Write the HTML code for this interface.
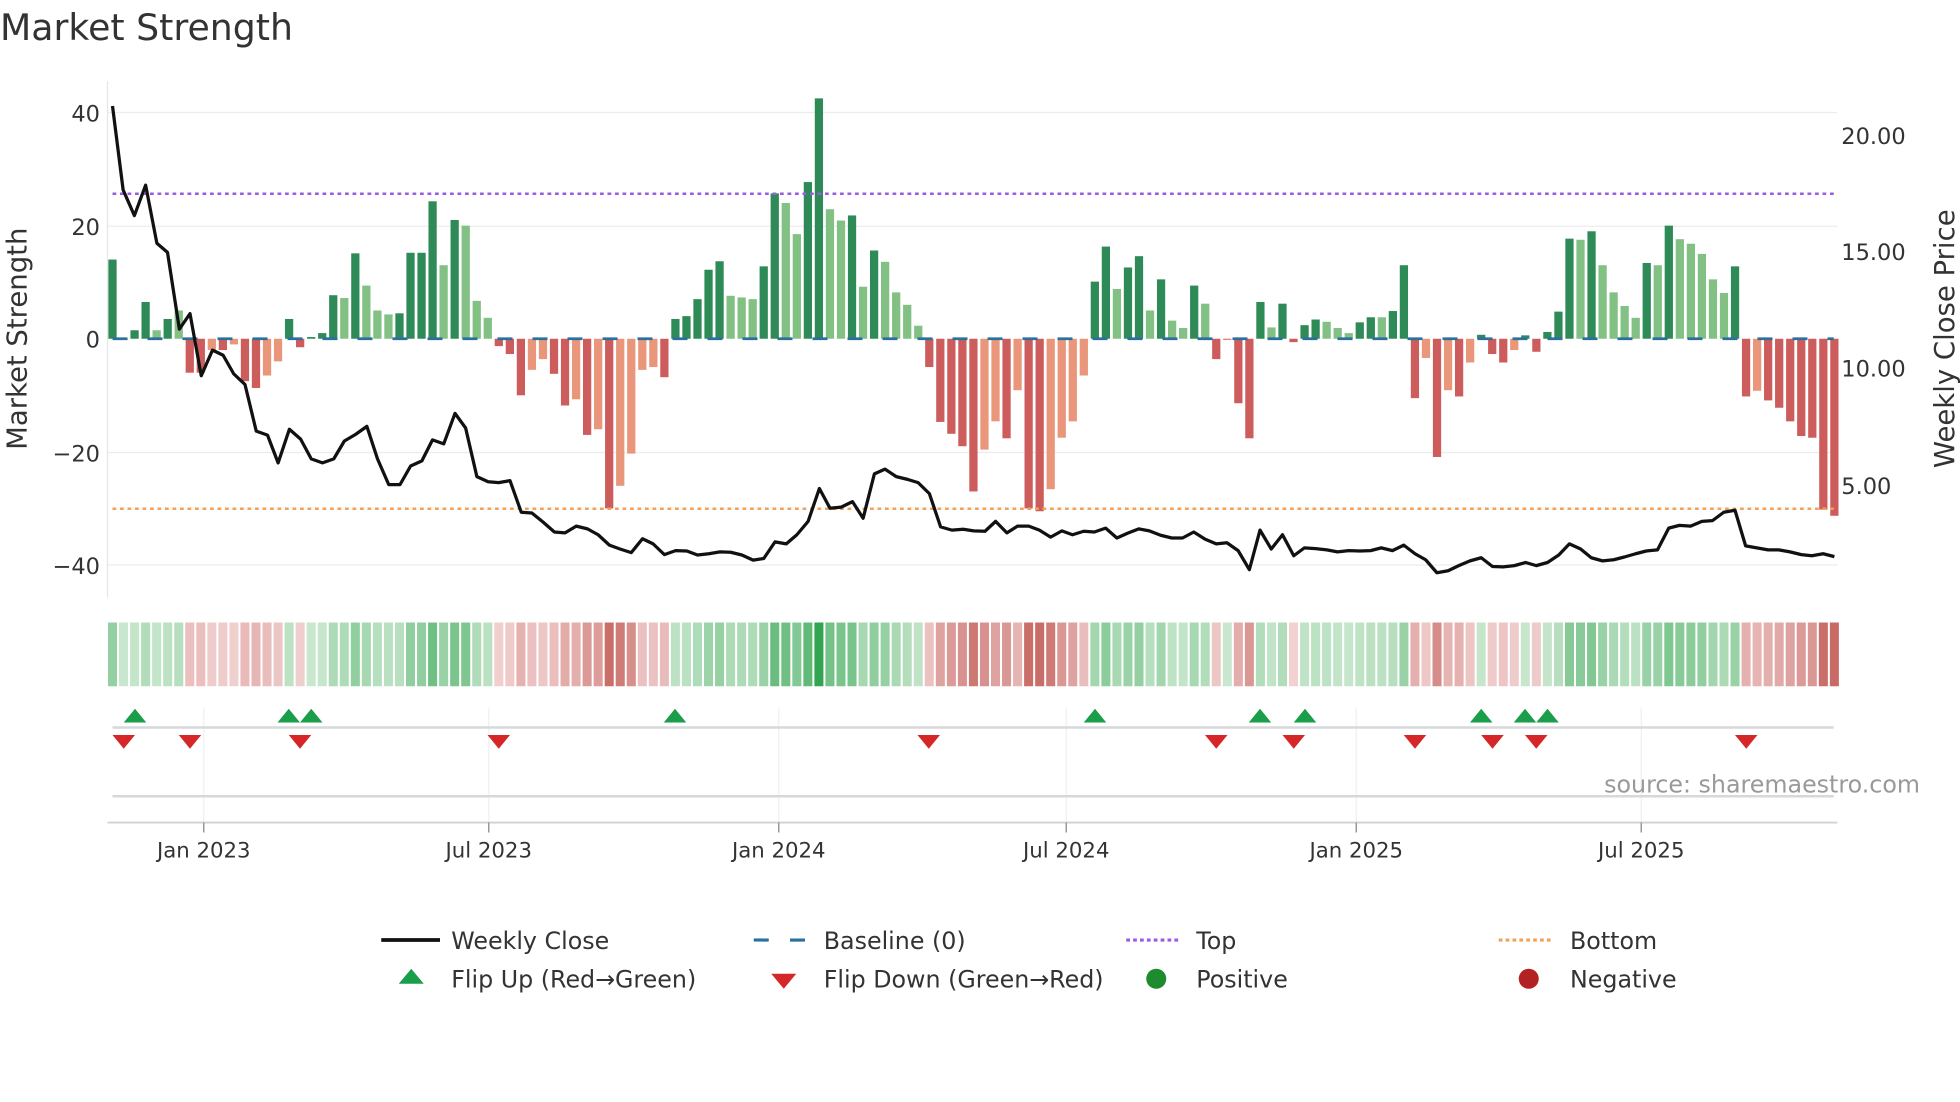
<!DOCTYPE html>
<html><head><meta charset="utf-8"><style>
html,body{margin:0;padding:0;background:#fff;}
svg{display:block;font-family:"DejaVu Sans","Liberation Sans",sans-serif;}
</style></head><body>
<svg id="s" width="1960" height="1102" viewBox="0 0 1568 881.6" xmlns="http://www.w3.org/2000/svg">
<rect width="1568" height="882" fill="#fff"/>
<text x="0" y="32" font-size="29" fill="#333">Market Strength</text>
<g stroke="#ececec" stroke-width="1">
<line x1="86" y1="90" x2="1470" y2="90"/><line x1="86" y1="181" x2="1470" y2="181"/>
<line x1="86" y1="362" x2="1470" y2="362"/><line x1="86" y1="452" x2="1470" y2="452"/>
</g>
<line x1="86" y1="65" x2="86" y2="478" stroke="#e6e6e6"/>
<g font-size="18" fill="#333" text-anchor="end">
<text x="80" y="97">40</text><text x="80" y="188">20</text><text x="80" y="278">0</text>
<text x="80" y="369">−20</text><text x="80" y="459">−40</text>
</g>
<g font-size="18" fill="#333">
<text x="1473" y="115">20.00</text><text x="1473" y="208">15.00</text>
<text x="1473" y="301">10.00</text><text x="1473" y="395">5.00</text>
</g>
<text transform="translate(21,271) rotate(-90)" font-size="22" fill="#333" text-anchor="middle">Market Strength</text>
<text transform="translate(1563,271) rotate(-90)" font-size="22" fill="#333" text-anchor="middle">Weekly Close Price</text>
<g id="bars"></g>
<line x1="90" y1="271" x2="1467" y2="271" stroke="#2a6f9e" stroke-width="2.2" stroke-dasharray="12 16" id="base"/>
<line x1="90" y1="155" x2="1467" y2="155" stroke="#9a5ce0" stroke-width="2" stroke-dasharray="3 3"/>
<line x1="90" y1="407" x2="1467" y2="407" stroke="#f0a25a" stroke-width="2" stroke-dasharray="3 3"/>
<polyline id="price" fill="none" stroke="#111" stroke-width="2.6" stroke-linejoin="round"/>
<g id="heat"></g>
<g stroke="#eef0f2"><line x1="163" y1="566" x2="163" y2="658"/><line x1="391" y1="566" x2="391" y2="658"/><line x1="623" y1="566" x2="623" y2="658"/><line x1="853" y1="566" x2="853" y2="658"/><line x1="1085" y1="566" x2="1085" y2="658"/><line x1="1313" y1="566" x2="1313" y2="658"/></g>
<line x1="90" y1="582" x2="1467" y2="582" stroke="#d6d8da" stroke-width="2"/>
<line x1="90" y1="637" x2="1467" y2="637" stroke="#d6d8da" stroke-width="2"/>
<line x1="86" y1="658" x2="1470" y2="658" stroke="#d0d2d4" stroke-width="1.5"/>
<g stroke="#999" stroke-width="1.2"><line x1="163" y1="658" x2="163" y2="666"/><line x1="391" y1="658" x2="391" y2="666"/><line x1="623" y1="658" x2="623" y2="666"/><line x1="853" y1="658" x2="853" y2="666"/><line x1="1085" y1="658" x2="1085" y2="666"/><line x1="1313" y1="658" x2="1313" y2="666"/></g>
<g id="flips"></g>
<g font-size="17" fill="#333" text-anchor="middle">
<text x="163" y="686">Jan 2023</text><text x="391" y="686">Jul 2023</text><text x="623" y="686">Jan 2024</text>
<text x="853" y="686">Jul 2024</text><text x="1085" y="686">Jan 2025</text><text x="1313" y="686">Jul 2025</text>
</g>
<text x="1536" y="634" font-size="19" fill="#999" text-anchor="end">source: sharemaestro.com</text>
<g font-size="19" fill="#333">
<line x1="305" y1="752" x2="352" y2="752" stroke="#111" stroke-width="3"/>
<text x="361" y="759">Weekly Close</text>
<line x1="603" y1="752" x2="647" y2="752" stroke="#2a6f9e" stroke-width="2.5" stroke-dasharray="12 17"/>
<text x="659" y="759">Baseline (0)</text>
<line x1="901" y1="752" x2="945" y2="752" stroke="#9a5ce0" stroke-width="2.5" stroke-dasharray="3 2.5"/>
<text x="957" y="759">Top</text>
<line x1="1199" y1="752" x2="1243" y2="752" stroke="#f0a25a" stroke-width="2.5" stroke-dasharray="3 2.5"/>
<text x="1256" y="759">Bottom</text>
<polygon points="319,787 339,787 329,775" fill="#1a9e4a"/>
<text x="361" y="790">Flip Up (Red→Green)</text>
<polygon points="617,779 637,779 627,791" fill="#d62728"/>
<text x="659" y="790">Flip Down (Green→Red)</text>
<circle cx="925" cy="783" r="8" fill="#1e8c2e"/>
<text x="957" y="790">Positive</text>
<circle cx="1223" cy="783" r="8" fill="#b22222"/>
<text x="1256" y="790">Negative</text>
</g>
</svg>
<script>
(function(){
var NS="http://www.w3.org/2000/svg";
function el(t,a,p){var e=document.createElementNS(NS,t);for(var k in a)e.setAttribute(k,a[k]);p.appendChild(e);return e;}
var d=[[14,'g'],[0,'g'],[1.5,'g'],[6.5,'g'],[1.5,'l'],[3.5,'g'],[5,'l'],[-6,'r'],[-6,'r'],[-2,'s'],[-2,'r'],[-1,'s'],[-7.5,'r'],[-8.7,'r'],[-6.5,'s'],[-4,'s'],[3.5,'g'],[-1.5,'r'],[0.3,'g'],[1,'g'],[7.7,'g'],[7.2,'l'],[15.1,'g'],[9.4,'l'],[5,'l'],[4.3,'l'],[4.5,'g'],[15.2,'g'],[15.2,'g'],[24.3,'g'],[13,'l'],[21,'g'],[20,'l'],[6.7,'l'],[3.7,'l'],[-1.3,'r'],[-2.7,'r'],[-10,'r'],[-5.5,'s'],[-3.6,'s'],[-6.2,'r'],[-11.8,'r'],[-10.7,'s'],[-17,'r'],[-16,'s'],[-30,'r'],[-26,'s'],[-20.3,'s'],[-5.5,'s'],[-5,'s'],[-6.8,'r'],[3.5,'g'],[4,'g'],[7,'g'],[12.2,'g'],[13.7,'g'],[7.6,'l'],[7.3,'l'],[7,'l'],[12.8,'g'],[25.7,'g'],[24,'l'],[18.5,'l'],[27.7,'g'],[42.5,'g'],[22.9,'l'],[20.9,'l'],[21.8,'g'],[9.2,'l'],[15.6,'g'],[13.6,'l'],[8.2,'l'],[6,'l'],[2.3,'l'],[-5,'r'],[-14.7,'r'],[-16.8,'r'],[-19,'r'],[-27,'r'],
[-19.6,'s'],[-14.6,'s'],[-17.6,'r'],[-9.1,'s'],[-30,'r'],[-30.5,'r'],[-26.6,'s'],[-17.5,'s'],[-14.6,'s'],[-6.5,'s'],[10.1,'g'],[16.3,'g'],[8.8,'l'],[12.6,'g'],[14.6,'g'],[5,'l'],[10.5,'g'],[3.2,'l'],[1.9,'l'],[9.4,'g'],[6.2,'l'],[-3.6,'r'],[0,'r'],[-11.4,'r'],[-17.6,'r'],[6.5,'g'],[2,'l'],[6.2,'g'],[-0.6,'r'],[2.4,'g'],[3.4,'g'],[3,'l'],[1.9,'l'],[1,'l'],[2.9,'g'],[3.8,'g'],[3.8,'l'],[4.9,'g'],[13,'g'],[-10.5,'r'],[-3.4,'s'],[-20.9,'r'],[-9.1,'s'],[-10.2,'r'],[-4.2,'s'],[0.7,'g'],[-2.7,'r'],[-4.2,'r'],[-2,'s'],[0.6,'g'],[-2.3,'r'],[1.2,'g'],[4.8,'g'],[17.7,'g'],[17.5,'l'],[19,'g'],[13,'l'],[8.2,'l'],[5.8,'l'],[3.7,'l'],[13.4,'g'],[13,'l'],[20,'g'],[17.6,'l'],[16.8,'l'],[15,'l'],[10.5,'l'],[8.1,'l'],[12.8,'g'],[-10.2,'r'],[-9.2,'s'],[-10.9,'r'],[-12.2,'r'],[-14.6,'r'],[-17.2,'r'],[-17.5,'r'],[-30.2,'r'],[-31.3,'r']];
var n=d.length, x0=90, x1=1467.5, st=(x1-x0)/(n-1), k=4.525;
var col={g:'#2e8b57',l:'#82c084',r:'#cd5c5c',s:'#e9967a'};
var bars=document.getElementById('bars'), heat=document.getElementById('heat');
function mix(a,b,t){return 'rgb('+[0,1,2].map(function(i){return Math.round(a[i]+(b[i]-a[i])*t);}).join(',')+')';}
d.forEach(function(v,i){
  var x=x0+i*st, h=v[0]*k, y=h>=0?271-h:271;
  el('rect',{x:x-3.3,y:y,width:6.6,height:Math.max(Math.abs(h),0.8),fill:col[v[1]]},bars);
  var a=Math.min(Math.abs(v[0])/42,1), c;
  if(v[0]>=0){c=mix([214,237,217],[50,165,80],Math.min(1,0.08+a*0.95));}
  else{c=mix([244,218,218],[200,105,100],Math.min(1,0.06+a*1.25));}
  el('rect',{x:x-st/2+0.8,y:498,width:st-1.6,height:51,fill:c},heat);
});
var p1=[[180,268],[197,480],[215,545],[233,468],[251,615],[268,638],[287,832],[304,793],[322,950],[340,885],[357,898],[374,945],[392,972],[410,1090],[428,1100],[445,1170],[463,1085],[481,1110],[498,1160],[516,1170],[534,1160],[551,1115],[569,1098],[587,1078],[604,1160],[622,1225],[640,1225],[657,1178],[675,1165],[692,1112],[710,1122],[728,1045],[745,1082],[763,1205],[781,1218],[798,1220],[816,1215],[834,1295],[851,1297],[869,1320],[887,1345],[904,1347],[922,1330],[940,1337],[957,1352],[975,1378],[992,1388],[1010,1397],[1028,1362],[1045,1375],[1063,1402],[1081,1392],[1099,1393],[1116,1403],[1134,1400],[1152,1395],[1169,1396],[1187,1403],[1205,1416],[1222,1412],[1240,1370],[1258,1375],[1275,1352],[1293,1318],[1311,1235],[1328,1285],[1346,1282],[1364,1268],[1381,1310],[1399,1198],[1416,1186],[1434,1205],[1452,1212],[1469,1220],[1487,1248],[1505,1332],[1523,1340],[1541,1338],[1558,1342]];
var p2=[[8,1343],[25,1318],[43,1347],[60,1330],[78,1330],[95,1340],[113,1358],[131,1342],[148,1352],[166,1343],[183,1345],[201,1335],[219,1360],[236,1348],[254,1337],[271,1342],[289,1353],[307,1360],[324,1360],[342,1345],[360,1363],[378,1375],[395,1372],[413,1392],[431,1440],[448,1340],[466,1388],[484,1352],[502,1405],[519,1385],[537,1387],[555,1390],[572,1395],[590,1392],[608,1393],[625,1392],[642,1385],[660,1392],[678,1378],[696,1400],[713,1415],[731,1448],[749,1443],[766,1430],[784,1418],[802,1410],[820,1432],[837,1433],[855,1430],[873,1422],[890,1430],[908,1422],[926,1403],[943,1375],[961,1388],[978,1410],[996,1418],[1014,1415],[1031,1408],[1049,1400],[1066,1393],[1084,1390],[1102,1335],[1119,1328],[1137,1330],[1155,1318],[1172,1316],[1190,1295],[1208,1290],[1225,1380],[1243,1385],[1261,1390],[1278,1390],[1296,1395],[1314,1402],[1331,1405],[1349,1400],[1367,1407]];
var pts=[];
p1.forEach(function(p){pts.push((p[0]/2).toFixed(1)+','+(p[1]/3.16).toFixed(1));});
p2.forEach(function(p){pts.push((p[0]/2+784).toFixed(1)+','+(p[1]/3.16).toFixed(1));});
document.getElementById('price').setAttribute('points',pts.join(' '));
var fl=document.getElementById('flips');
[108,231,249,540,876,1008,1044,1185,1220,1238].forEach(function(x){el('polygon',{points:(x-9)+',578 '+(x+9)+',578 '+x+',567',fill:'#1a9e4a'},fl);});
[99,152,240,399,743,973,1035,1132,1194,1229,1397].forEach(function(x){el('polygon',{points:(x-9)+',588 '+(x+9)+',588 '+x+',599',fill:'#d62728'},fl);});
})();
</script>
</body></html>
